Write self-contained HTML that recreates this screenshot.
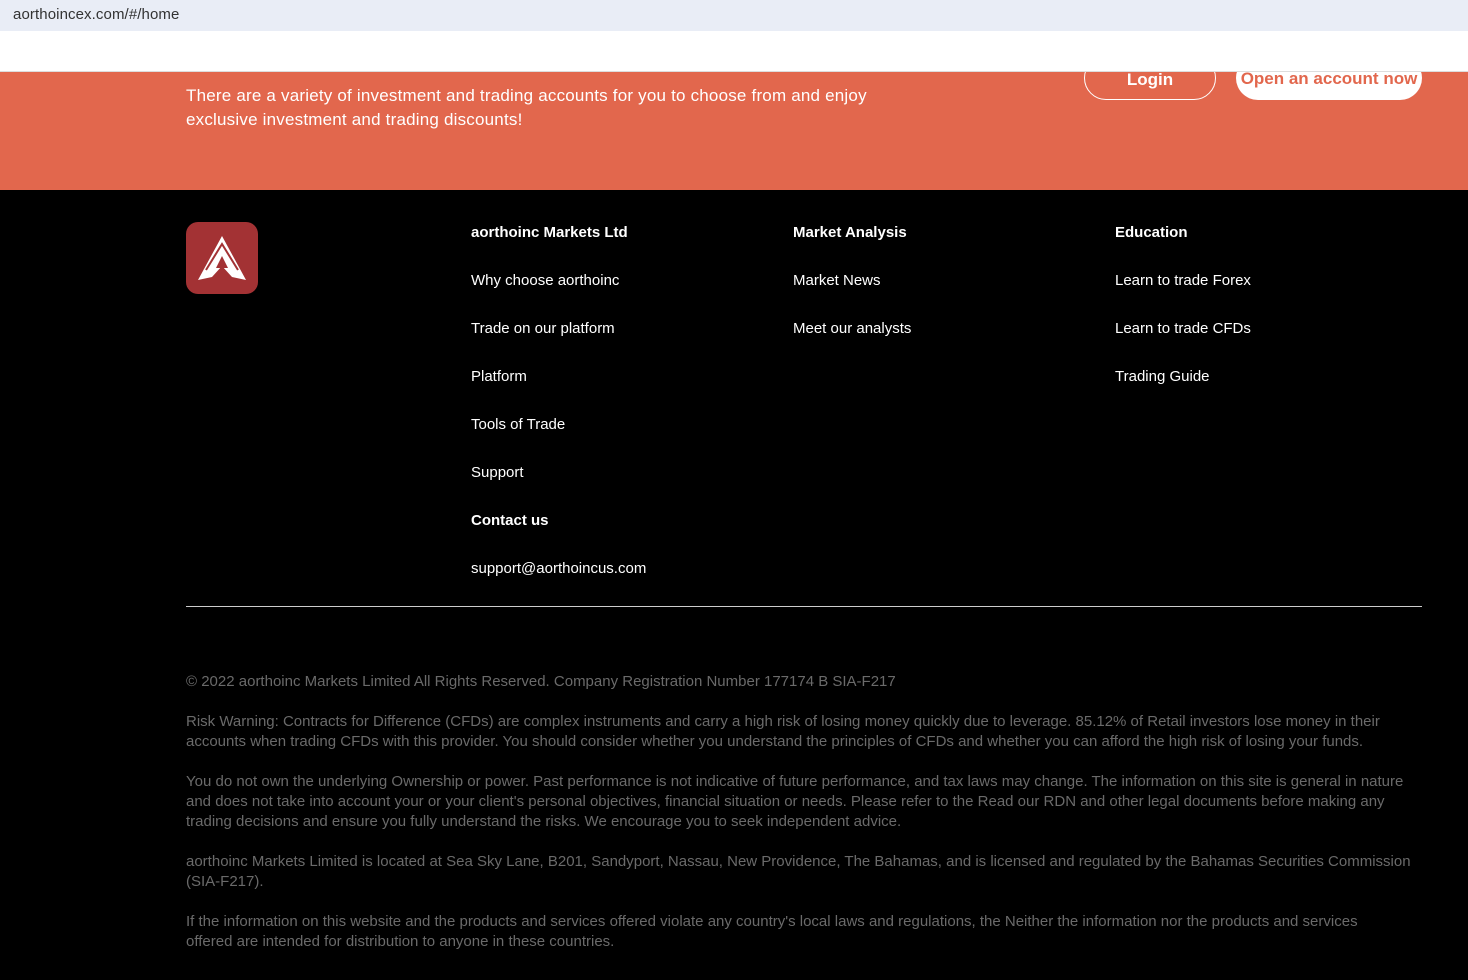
<!DOCTYPE html>
<html><head><meta charset="utf-8"><style>
*{margin:0;padding:0;box-sizing:border-box}
body{width:1468px;height:980px;overflow:hidden;background:#000;font-family:"Liberation Sans",sans-serif;position:relative}
.url{position:absolute;left:0;top:0;width:1468px;height:31px;background:#e9edf6;color:#333;font-size:15px;line-height:29px;padding-left:13px;letter-spacing:0.1px}
.hdr{position:absolute;left:0;top:31px;width:1468px;height:41px;background:#fff;border-bottom:1px solid #ddd;z-index:2}
.band{position:absolute;left:0;top:72px;width:1468px;height:118px;background:#e2674d}
.band p{position:absolute;left:186px;top:12px;color:#fff;font-size:17px;line-height:24px;width:760px;letter-spacing:0.2px;white-space:nowrap}
.btn{position:absolute;top:56px;height:44px;border-radius:22px;font-weight:bold;font-size:17px;text-align:center;line-height:46px;z-index:1}
.login{left:1084px;width:132px;border:1px solid #fff;color:#fff;background:#e2674d}
.open{left:1236px;width:186px;background:#fff;color:#e2674d}
.logo{position:absolute;left:186px;top:222px;width:72px;height:72px;background:#a33234;border-radius:12px}
.col{position:absolute;top:223px;color:#fff;font-size:15px}
.col div{height:48px;line-height:20px}
hr{position:absolute;left:186px;top:606px;width:1236px;border:0;border-top:1px solid #ccc}
.legal{position:absolute;left:186px;top:672px;width:1260px;color:#6a6a6a;font-size:15px;line-height:20px;letter-spacing:0;white-space:nowrap}
.legal p{margin-bottom:20px}
</style></head><body>
<div class="url">aorthoincex.com/#/home</div>
<div class="hdr"></div>
<div class="band"><p>There are a variety of investment and trading accounts for you to choose from and enjoy<br>exclusive investment and trading discounts!</p></div>
<div class="btn login">Login</div>
<div class="btn open">Open an account now</div>
<div class="logo"><svg width="72" height="72" viewBox="0 0 72 72"><polygon points="36,14 60,58 46,55 36,44 26,55 12,58" fill="#fff"/><polygon points="36,34 30,46 42,46" fill="#a33234"/><path d="M20,48 L36,22 L52,48" stroke="#a33234" stroke-width="2" fill="none"/></svg></div>
<div class="col" style="left:471px"><div><b>aorthoinc Markets Ltd</b></div><div>Why choose aorthoinc</div><div>Trade on our platform</div><div>Platform</div><div>Tools of Trade</div><div>Support</div><div><b>Contact us</b></div><div>support@aorthoincus.com</div></div>
<div class="col" style="left:793px"><div><b>Market Analysis</b></div><div>Market News</div><div>Meet our analysts</div></div>
<div class="col" style="left:1115px"><div><b>Education</b></div><div>Learn to trade Forex</div><div>Learn to trade CFDs</div><div>Trading Guide</div></div>
<hr>
<div class="legal">
<p>© 2022 aorthoinc Markets Limited All Rights Reserved. Company Registration Number 177174 B SIA-F217</p>
<p>Risk Warning: Contracts for Difference (CFDs) are complex instruments and carry a high risk of losing money quickly due to leverage. 85.12% of Retail investors lose money in their<br>accounts when trading CFDs with this provider. You should consider whether you understand the principles of CFDs and whether you can afford the high risk of losing your funds.</p>
<p>You do not own the underlying Ownership or power. Past performance is not indicative of future performance, and tax laws may change. The information on this site is general in nature<br>and does not take into account your or your client's personal objectives, financial situation or needs. Please refer to the Read our RDN and other legal documents before making any<br>trading decisions and ensure you fully understand the risks. We encourage you to seek independent advice.</p>
<p>aorthoinc Markets Limited is located at Sea Sky Lane, B201, Sandyport, Nassau, New Providence, The Bahamas, and is licensed and regulated by the Bahamas Securities Commission<br>(SIA-F217).</p>
<p>If the information on this website and the products and services offered violate any country's local laws and regulations, the Neither the information nor the products and services<br>offered are intended for distribution to anyone in these countries.</p>
</div>
</body></html>
